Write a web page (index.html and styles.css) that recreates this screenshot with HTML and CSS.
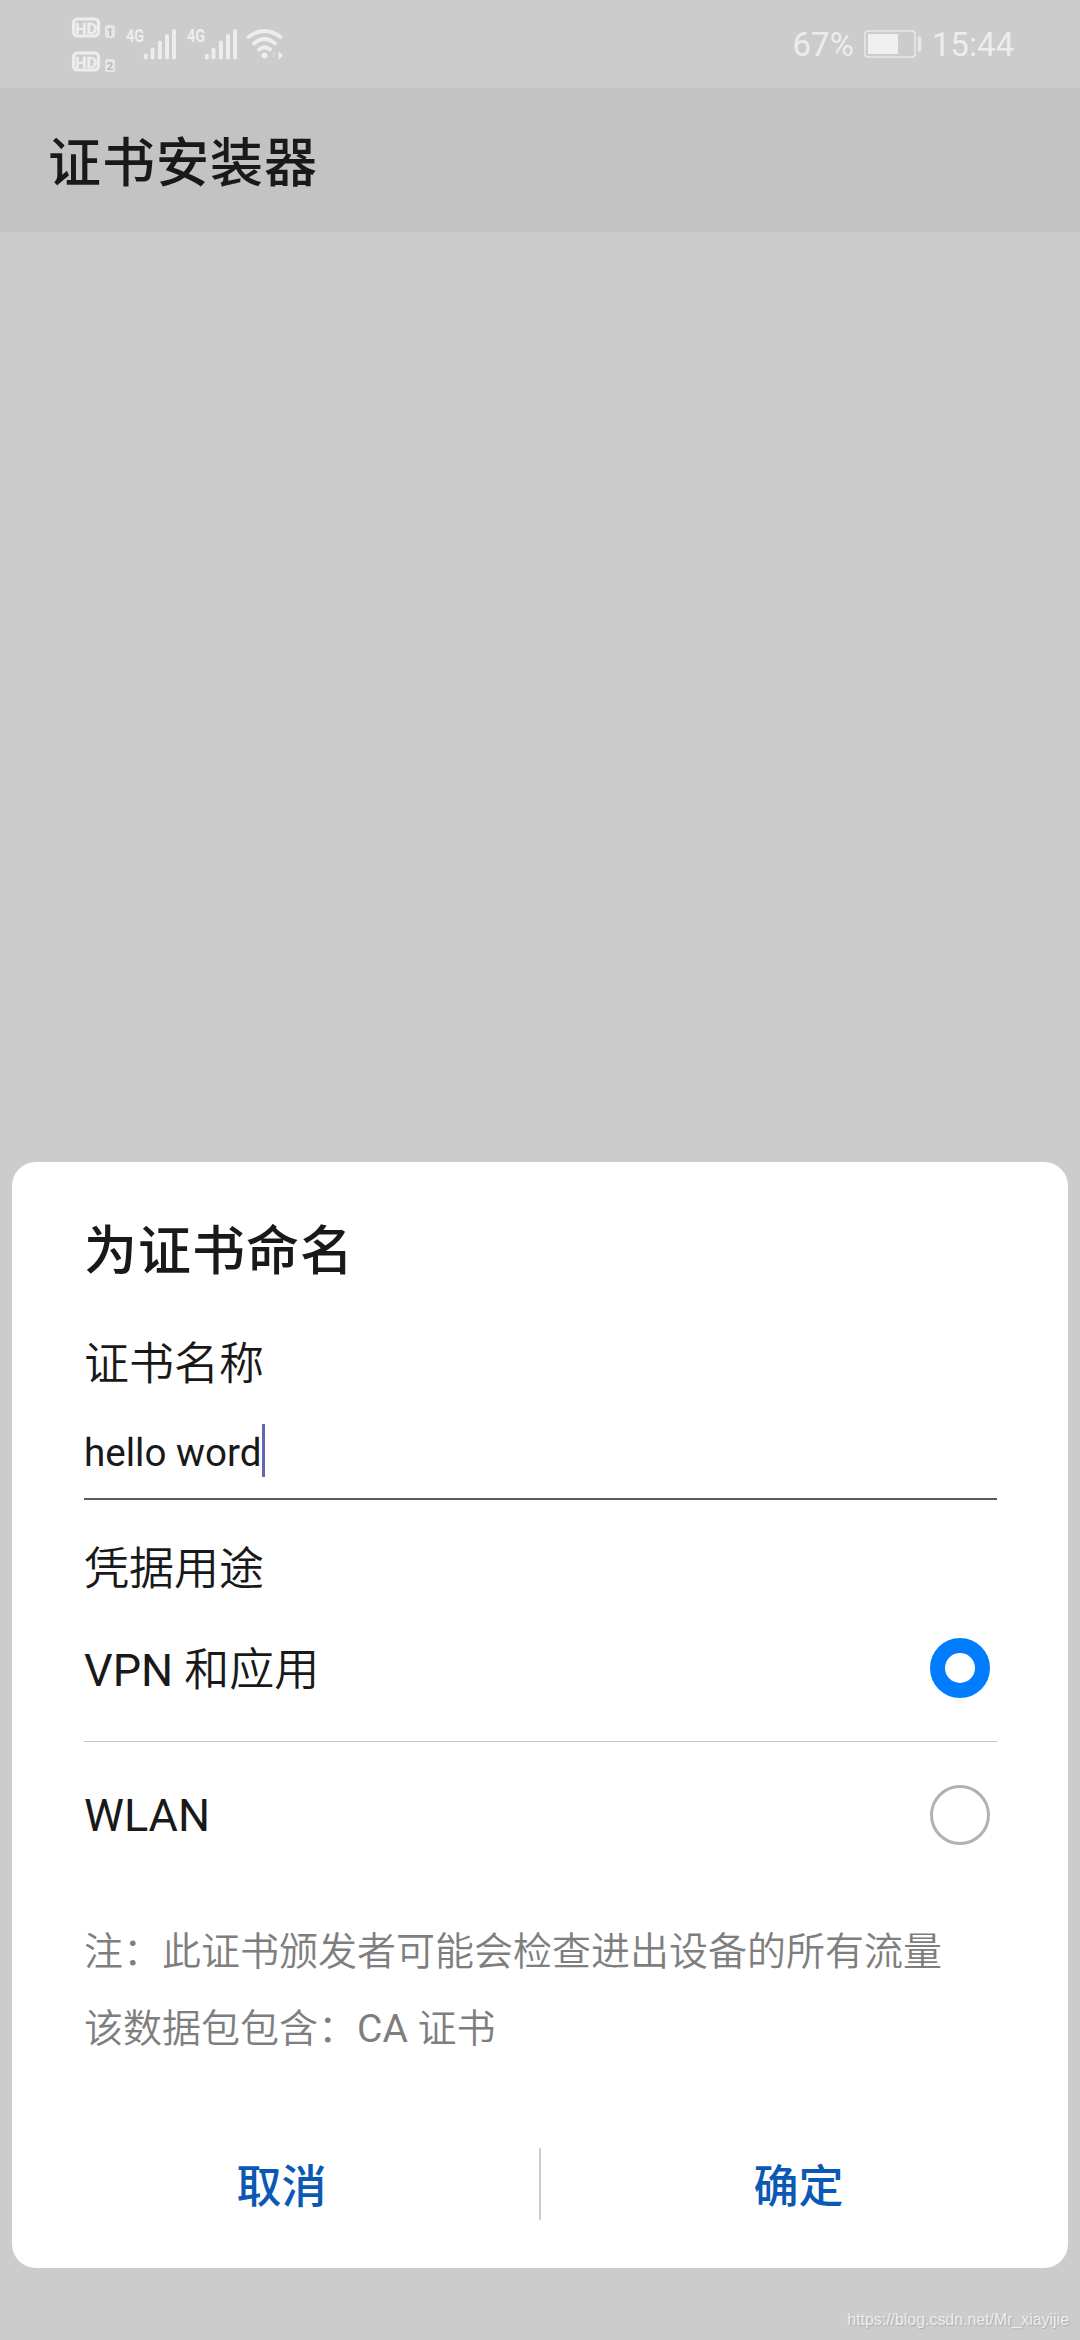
FILE: index.html
```
<!DOCTYPE html>
<html lang="zh-CN">
<head>
<meta charset="utf-8">
<title>证书安装器</title>
<link rel="stylesheet" href="styles.css">
</head>
<body>
<div class="screen">
  <header class="status">
    <svg class="status-icons" width="220" height="88" viewBox="0 0 220 88" fill="none" stroke="#ededed">
      <rect x="3.500" y="19" width="25" height="17" rx="4" stroke-width="3.200"/>
      <rect x="3.500" y="53" width="25" height="17" rx="4" stroke-width="3.200"/>
      <rect x="35" y="25" width="10" height="13" rx="2.500" fill="#e6e6e6" stroke="none"/>
      <rect x="35" y="59" width="10" height="13" rx="2.500" fill="#e6e6e6" stroke="none"/>
      <g fill="#ededed" stroke="#ededed" stroke-width=".5" class="hd">
        <text x="5" y="33.500" textLength="22" lengthAdjust="spacingAndGlyphs">HD</text>
        <text x="5" y="67.500" textLength="22" lengthAdjust="spacingAndGlyphs">HD</text>
      </g>
      <g class="sim">
        <text x="36.800" y="35.500">1</text>
        <text x="36.800" y="69.500">2</text>
      </g>
      <g fill="#ededed" stroke="none" class="net">
        <text x="56" y="42" textLength="18" lengthAdjust="spacingAndGlyphs">4G</text>
        <text x="117" y="42" textLength="18" lengthAdjust="spacingAndGlyphs">4G</text>
      </g>
      <g stroke-width="4" stroke-linecap="round">
        <path d="M75.800 55.500v2M82.500 49.500v8M89.900 42.500v15M97 36v21.500M104 31v26.500"/>
        <path d="M136.800 55.500v2M143.500 49.500v8M150.900 42.500v15M158 36v21.500M165 31v26.500"/>
      </g>
      <g stroke-width="3.800" stroke-linecap="round">
        <path d="M178.500 37Q194.500 25 210.500 37M184 43.500Q194.500 34.500 205 43.500M189 49.500Q194.500 45 200 49.500"/>
      </g>
      <circle cx="194.500" cy="55.500" r="3" fill="#ededed" stroke="none"/>
      <path d="M208.500 51l4.500 4.500-4.500 4.500z" fill="#ededed" stroke="none"/>
      <path d="M204 51.500v6" stroke-width="1.500" opacity=".5"/>
    </svg>
    <div class="status-right">
      <span>67%</span>
      <svg width="58" height="28" viewBox="0 0 58 28" fill="none">
        <rect x="1" y="1" width="50" height="26" rx="3" stroke="#e8e8e8" stroke-width="1.600"/>
        <rect x="4" y="4" width="30" height="20" fill="#efefef"/>
        <path d="M55.500 8v12" stroke="#e8e8e8" stroke-width="3.500" stroke-linecap="round"/>
      </svg>
      <span>15:44</span>
    </div>
  </header>
  <h1 class="appbar">证书安装器</h1>
  <main class="backdrop">
    <section class="dialog">
      <h2 class="dialog-title">为证书命名</h2>
      <div class="label">证书名称</div>
      <div class="input"><span>hello word</span><i class="caret"></i></div>
      <div class="label purpose">凭据用途</div>
      <div class="option"><span>VPN 和应用</span><i class="radio checked"></i></div>
      <div class="option last"><span>WLAN</span><i class="radio"></i></div>
      <div class="notes">
        <p>注：此证书颁发者可能会检查进出设备的所有流量</p>
        <p>该数据包包含：CA 证书</p>
      </div>
      <div class="actions">
        <div class="action">取消</div>
        <i class="separator"></i>
        <div class="action">确定</div>
      </div>
    </section>
    <footer class="watermark">https://blog.csdn.net/Mr_xiayijie</footer>
  </main>
</div>
</body>
</html>
```
FILE: styles.css
```
* { box-sizing: border-box; }
body {
  margin: 0;
  background: #ccc;
  color: #191919;
  font-family: Roboto, "Noto Sans CJK SC DemiLight", "Noto Sans CJK SC", sans-serif;
}
h1, h2, p { margin: 0; }
.screen {
  display: flex;
  flex-direction: column;
  width: 1080px;
  height: 2340px;
}
.status {
  display: flex;
  justify-content: space-between;
  height: 88px;
  padding: 0 66px 0 70px;
}
.status-icons { display: block; }
.hd { font: 700 15px Roboto, sans-serif; }
.sim { font: 700 11px Roboto, sans-serif; }
.sim text { fill: #b8b8b8; stroke: none; }
.net { font: 700 18px Roboto, sans-serif; }
.status-right {
  display: flex;
  align-items: center;
  gap: 10px;
  color: #ededed;
  font-size: 33px;
  line-height: 40px;
}
.status-right span { padding-top: 2px; }
.appbar {
  height: 144px;
  padding: 6px 0 0 48px;
  background: #c3c3c3;
  font-family: Roboto, "Noto Sans CJK SC", sans-serif;
  font-size: 53px;
  font-weight: 500;
  letter-spacing: 1px;
  line-height: 140px;
}
.backdrop {
  display: flex;
  flex: 1;
  flex-direction: column;
  padding: 930px 12px 0;
}
.dialog {
  height: 1106px;
  padding: 0 72px;
  border-radius: 24px;
  background: #fff;
}
.dialog-title {
  height: 178px;
  padding-top: 1px;
  font-family: Roboto, "Noto Sans CJK SC", sans-serif;
  font-size: 53px;
  font-weight: 500;
  letter-spacing: 1px;
  line-height: 178px;
}
.label {
  font-size: 45px;
  line-height: 50px;
}
.input {
  display: flex;
  width: 913px;
  height: 110px;
  padding: 33px 0 15px;
  border-bottom: 2px solid #5b5b5b;
  font-size: 38.600px;
  line-height: 60px;
}
.caret {
  width: 3px;
  height: 53px;
  margin-top: 1px;
  background: #6467b8;
}
.purpose { margin-top: 45px; }
.option {
  display: flex;
  align-items: center;
  justify-content: space-between;
  width: 913px;
  height: 147px;
  padding-right: 7px;
  border-bottom: 1px solid #c2c5c4;
  font-size: 45px;
  line-height: 60px;
}
.option span { padding-top: 6px; }
.option.last {
  height: 145px;
  border: 0;
}
.option.last span { padding-top: 3px; }
.radio {
  width: 60px;
  height: 60px;
  border: 3px solid #b1b1b1;
  border-radius: 50%;
}
.radio.checked { border: 15px solid #007dff; }
.notes {
  margin-top: 27px;
  color: #7e7e7e;
  font-size: 39px;
  line-height: 77px;
  white-space: nowrap;
}
.actions {
  display: flex;
  height: 72px;
  margin: 80px -60px 0;
}
.action {
  flex: 1;
  padding-top: 7px;
  color: #0a59b4;
  font-family: Roboto, "Noto Sans CJK SC", sans-serif;
  font-size: 45px;
  font-weight: 500;
  line-height: 66px;
  text-align: center;
}
.separator {
  width: 2px;
  background: #ccc;
}
.watermark {
  margin: 42px -1px 0 0;
  color: #eee;
  font-family: "Liberation Sans", Arial, sans-serif;
  font-size: 15.900px;
  line-height: 20px;
  text-align: right;
  text-shadow: 1px 1px 1px #aaa;
}
```
